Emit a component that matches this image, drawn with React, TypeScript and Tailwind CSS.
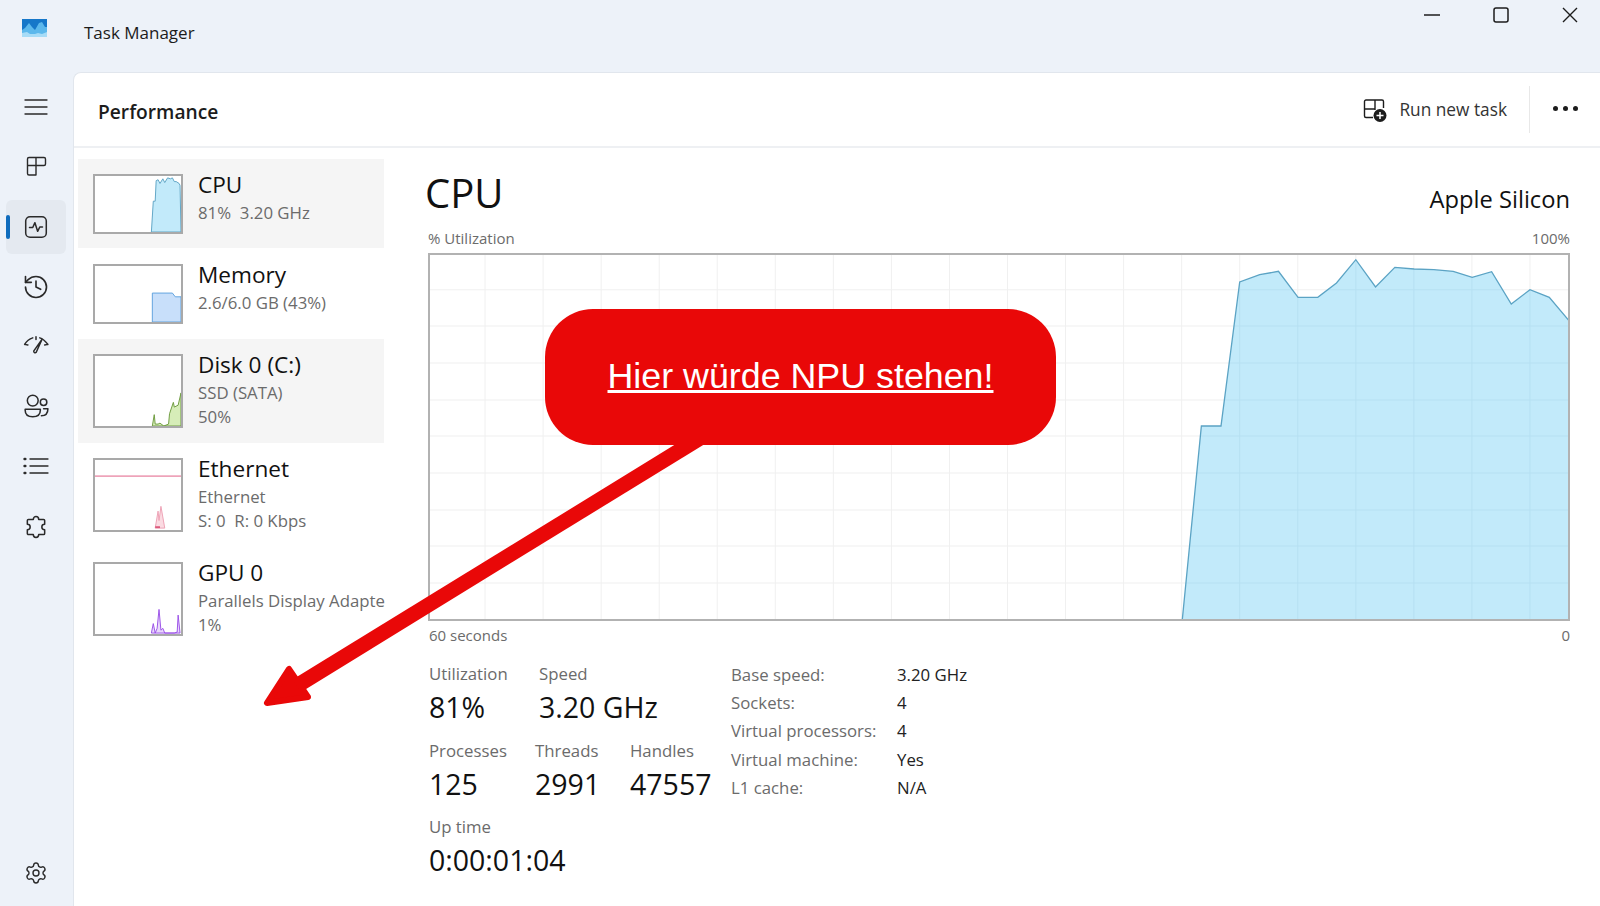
import { Settings, History } from "lucide-react";

const cpuLine = "753.7,366 772.7,173 792.3,173 811,29 831,21.7 849.7,18.3 869.3,44.3 889,44.3 907.7,30 927,6.7 946.7,34 966,14.3 985.3,16 1005,16.7 1024.3,18.3 1043.3,24.3 1062.7,18.7 1082.3,51 1101,36.7 1120.3,44.3 1139.7,67.3"

const gridX = [57, 115, 173, 231, 289, 347, 405, 463, 521, 579, 637, 695, 753, 811, 869, 927, 985, 1043, 1101]
const gridY = [36.7, 73, 110, 147, 183, 220, 257, 293, 330]

function Thumb({ h, children }: { h: string; children: React.ReactNode }) {
  return <div className={`w-[90px] shrink-0 border-2 border-[#a9a9a9] bg-white ${h}`}>{children}</div>
}

function CpuThumb() {
  return (
    <Thumb h="h-[60px]">
      <svg viewBox="0 0 90 60" preserveAspectRatio="none" className="w-full h-full">
        <polygon fill="#c2eafa" stroke="#5ba3c4" strokeWidth="1" points="59,60 61,27 63,27 64,5 66,4 68,8 71,3 73,7 76,2 79,3 81,2 83,6 85,6 88,8 89,10 90,60" />
      </svg>
    </Thumb>
  )
}

function MemoryThumb() {
  return (
    <Thumb h="h-[60px]">
      <svg viewBox="0 0 90 60" preserveAspectRatio="none" className="w-full h-full">
        <polygon fill="#c8dffa" stroke="#5ca0dd" strokeWidth="1" points="60,60 60,29 81,29 84,33 90,33 90,60" />
      </svg>
    </Thumb>
  )
}

function DiskThumb() {
  return (
    <Thumb h="h-[74px]">
      <svg viewBox="0 0 90 74" preserveAspectRatio="none" className="w-full h-full">
        <polygon fill="#d6edb8" stroke="#6d9a3d" strokeWidth="1" points="60,74 62,62 63,72 66,72 68,71 72,74 77,72 78,61 82,49 83,54 87,52 90,39 90,74" />
      </svg>
    </Thumb>
  )
}

function EthernetThumb() {
  return (
    <Thumb h="h-[74px]">
      <svg viewBox="0 0 90 74" preserveAspectRatio="none" className="w-full h-full">
        <line x1="0" y1="17" x2="90" y2="17" stroke="#e0587f" strokeWidth="1" />
        <polygon fill="#fbdbe2" stroke="#eda0b4" strokeWidth="1" points="63,72 66,54 67,64 69,49 73,72" />
        <line x1="63" y1="71" x2="68" y2="71" stroke="#dc5a7c" strokeWidth="2" />
      </svg>
    </Thumb>
  )
}

function GpuThumb() {
  return (
    <Thumb h="h-[74px]">
      <svg viewBox="0 0 90 74" preserveAspectRatio="none" className="w-full h-full">
        <polygon fill="#e9d9fb" stroke="#9a4fe8" strokeWidth="1" points="59,73 61,63 63,73 65,68 67,48 69,70 71,68 73,73 83,73 86,72 87,54 89,73" />
      </svg>
    </Thumb>
  )
}

function Item({ box, active, thumb, title, lines }: { box: string; active?: boolean; thumb: React.ReactNode; title: string; lines: string[] }) {
  return (
    <div className={`ml-[4px] w-[306px] flex pl-[15px] ${box} ${active ? "bg-[#f5f5f5]" : ""}`}>
      {thumb}
      <div className="ml-[15px] -mt-[3px] shrink-0 whitespace-nowrap">
        <div className="text-[22.6px] leading-[28px] text-[#111]">{title}</div>
        <div className="mt-[2px] text-[16.8px] leading-[24px] text-[#6b6b6b]">
          {lines.map((l) => <div key={l}>{l}</div>)}
        </div>
      </div>
    </div>
  )
}

function Stat({ w, label, value }: { w: string; label: string; value: string }) {
  return (
    <div className={w}>
      <div className="text-[16.8px] leading-[20px] text-[#6b6b6b] whitespace-nowrap">{label}</div>
      <div className="mt-[3px] text-[28.5px] leading-[40px] text-[#111] whitespace-nowrap">{value}</div>
    </div>
  )
}

function NavIcon({ children, active }: { children: React.ReactNode; active?: boolean }) {
  return (
    <div className="h-[60px] w-full pr-[2px] flex items-center justify-center relative">
      {active && <div className="absolute left-[6px] top-[3px] w-[60px] h-[54px] rounded-md bg-[#e4e9f0]" />}
      {active && <div className="absolute left-[6px] top-[18px] w-[4px] h-[24px] rounded-full bg-[#0f6cbd]" />}
      <div className="relative text-[#2a2a2a]">{children}</div>
    </div>
  )
}

const iconProps = { width: 26, height: 26, viewBox: "0 0 24 24", fill: "none", stroke: "currentColor", strokeWidth: 1.4, strokeLinecap: "round" as const, strokeLinejoin: "round" as const }

export default function App() {
  const details = [
    ["Base speed:", "3.20 GHz"],
    ["Sockets:", "4"],
    ["Virtual processors:", "4"],
    ["Virtual machine:", "Yes"],
    ["L1 cache:", "N/A"],
  ]

  return (
    <div className="relative w-[1600px] h-[906px] overflow-hidden bg-[#edf2f9] flex flex-col font-['Open_Sans',sans-serif]">
      {/* barra de titulo */}
      <div className="h-[72px] shrink-0 flex items-start relative">
        <svg width="25" height="18" viewBox="0 0 25 18" className="ml-[22px] mt-[19px]">
          <rect width="25" height="18" fill="#1677c9" />
          <path d="M0 11 L3 9 L7 4 L10 8 L13 11 L17 4 L20 3 L23 8 L25 8 V18 H0 Z" fill="#5cb8ec" />
          <path d="M0 14 L5 13 L8 15 L13 15 L16 14 L20 15 L25 13 V18 H0 Z" fill="#a7dcf7" />
        </svg>
        <div className="ml-[37px] mt-[20px] text-[17px] leading-[26px] text-[#1c1c1c]">Task Manager</div>
        <div className="ml-auto mr-[22px] mt-[7px] flex items-start gap-[53px] text-[#1c1c1c]">
          <svg width="16" height="16" viewBox="0 0 16 16"><line x1="0" y1="8" x2="16" y2="8" stroke="currentColor" strokeWidth="1.5" /></svg>
          <svg width="16" height="16" viewBox="0 0 16 16"><rect x="1" y="1" width="14" height="14" rx="2" fill="none" stroke="currentColor" strokeWidth="1.5" /></svg>
          <svg width="16" height="16" viewBox="0 0 16 16"><path d="M1 1 L15 15 M15 1 L1 15" stroke="currentColor" strokeWidth="1.4" /></svg>
        </div>
      </div>

      <div className="flex-1 flex min-h-0">
        {/* menu lateral */}
        <div className="w-[73px] shrink-0 flex flex-col pt-[5px] pb-[3px]">
          <NavIcon>
            <svg {...iconProps} width={24} height={24} strokeWidth={1.3}><path d="M1 5 H23 M1 12 H23 M1 19 H23" /></svg>
          </NavIcon>
          <NavIcon>
            <svg {...iconProps} width={24} height={24} className="-mt-[2px]"><path d="M3.5 11.5 V5 a1.5 1.5 0 0 1 1.5 -1.5 H20 a1.5 1.5 0 0 1 1.5 1.5 V10 a1.5 1.5 0 0 1 -1.5 1.5 Z M12 3.5 V21 M3.5 11.5 V19.5 a1.5 1.5 0 0 0 1.5 1.5 H12" /></svg>
          </NavIcon>
          <NavIcon active>
            <svg {...iconProps}><rect x="2.5" y="2.5" width="19" height="19" rx="4" /><path d="M6 12.5 H9 L11 8 L13.5 16 L15.5 12 H18" /></svg>
          </NavIcon>
          <NavIcon><History size={28} strokeWidth={1.4} /></NavIcon>
          <NavIcon>
            <svg {...iconProps} className="-mt-[2px]">
              <path d="M1.5 10.5 C3 8 5.5 5.5 9 4.5 M1.5 10.5 L4.5 11 M15.5 4.5 C19 5.5 21 8 23 10.5 M23 10.5 L20 11 M12 3.5 V6" />
              <path d="M17.5 6 L10 16.5 a1.3 1.3 0 0 0 2.2 1.3 Z" />
            </svg>
          </NavIcon>
          <NavIcon>
            <svg {...iconProps} className="-mt-[2px]"><circle cx="9" cy="7" r="5" /><circle cx="19" cy="8.5" r="3" /><path d="M2 15 H16 V16 C16 20 13 22 9 22 C5 22 2 20 2 16 Z" /><path d="M19 14.5 H23 C23 18.5 21 21 17 21" /></svg>
          </NavIcon>
          <NavIcon>
            <svg {...iconProps} className="-mt-[2px]"><path d="M6.5 5.5 H23 M6.5 12 H23 M6.5 18.5 H23" /><path d="M1.5 5.5 h0.6 M1.5 12 h0.6 M1.5 18.5 h0.6" strokeWidth={2.4} /></svg>
          </NavIcon>
          <NavIcon>
            <svg {...iconProps}><path d="M9.5 5 C9.5 1.5 14.5 1.5 14.5 5 H19 a1 1 0 0 1 1 1 V9.5 C16.5 9.5 16.5 14.5 20 14.5 V18 a1 1 0 0 1 -1 1 H14.5 C14.5 22.5 9.5 22.5 9.5 19 H5 a1 1 0 0 1 -1 -1 V14.5 C7.5 14.5 7.5 9.5 4 9.5 V6 a1 1 0 0 1 1 -1 Z" /></svg>
          </NavIcon>
          <div className="mt-auto">
            <NavIcon><Settings size={24} strokeWidth={1.4} /></NavIcon>
          </div>
        </div>

        {/* conteudo */}
        <div className="flex-1 min-w-0 bg-white rounded-tl-lg border-l border-t border-[#e1e6ed] flex flex-col">
          <div className="h-[75px] shrink-0 border-b-2 border-[#eef0f3] flex items-center">
            <div className="ml-[24px] mt-[4px] text-[19.2px] font-semibold leading-[28px] text-[#1c1c1c]">Performance</div>
            <div className="ml-auto flex items-center">
              <svg width="24" height="24" viewBox="0 0 24 24" className="text-[#1c1c1c]">
                <path d="M12 12 V2 H3 a1.5 1.5 0 0 0 -1.5 1.5 V18 a1.5 1.5 0 0 0 1.5 1.5 H10 M1.5 11 H12 M12 2 H19 a1.5 1.5 0 0 1 1.5 1.5 V10" fill="none" stroke="currentColor" strokeWidth="1.4" />
                <circle cx="17" cy="17.5" r="6.5" fill="currentColor" />
                <path d="M17 14 V21 M13.5 17.5 H20.5" stroke="white" strokeWidth="1.5" />
              </svg>
              <div className="ml-[12px] text-[17.3px] leading-[24px] text-[#333]">Run new task</div>
              <div className="ml-[22px] w-px h-[47px] bg-[#e8e8e8]" />
              <div className="ml-[23px] mr-[22px] -mt-[2px] flex gap-[5px]">
                <span className="w-[5px] h-[5px] rounded-full bg-[#1c1c1c]" />
                <span className="w-[5px] h-[5px] rounded-full bg-[#1c1c1c]" />
                <span className="w-[5px] h-[5px] rounded-full bg-[#1c1c1c]" />
              </div>
            </div>
          </div>

          <div className="flex-1 flex min-h-0">
            <div className="w-[354px] shrink-0 pt-[11px]">
              <Item box="h-[89px] pt-[15px]" active thumb={<CpuThumb />} title="CPU" lines={["81%\u00a0\u00a03.20 GHz"]} />
              <Item box="h-[91px] pt-[16px]" thumb={<MemoryThumb />} title="Memory" lines={["2.6/6.0 GB (43%)"]} />
              <Item box="h-[104px] pt-[15px]" active thumb={<DiskThumb />} title="Disk 0 (C:)" lines={["SSD (SATA)", "50%"]} />
              <Item box="h-[104px] pt-[15px]" thumb={<EthernetThumb />} title="Ethernet" lines={["Ethernet", "S: 0\u00a0\u00a0R: 0 Kbps"]} />
              <Item box="h-[104px] pt-[15px]" thumb={<GpuThumb />} title="GPU 0" lines={["Parallels Display Adapte", "1%"]} />
            </div>

            <div className="flex-1 min-w-0 pr-[30px] pt-[22px]">
              <div className="flex justify-between items-end h-[46px]">
                <div className="-ml-[3px] text-[40px] leading-[46px] text-[#111]">CPU</div>
                <div className="text-[23.7px] leading-[34px] text-[#111]">Apple Silicon</div>
              </div>
              <div className="mt-[12px] flex justify-between text-[15px] leading-[20px] text-[#6b6b6b]">
                <span>% Utilization</span>
                <span>100%</span>
              </div>
              <div className="mt-[5px] h-[368px] border-2 border-[#b2b2b2]">
                <svg viewBox="2 2 1137 364" preserveAspectRatio="none" className="w-full h-full block">
                  <defs>
                    <clipPath id="areaCpu"><polygon points={`${cpuLine} 1140,366`} /></clipPath>
                  </defs>
                  {gridX.map((x) => <line key={x} x1={x} y1="0" x2={x} y2="366" stroke="#f0f0f0" strokeWidth="1" />)}
                  {gridY.map((y) => <line key={y} x1="0" y1={y} x2="1140" y2={y} stroke="#f0f0f0" strokeWidth="1" />)}
                  <polygon points={`${cpuLine} 1140,366`} fill="#c2eafa" />
                  <g clipPath="url(#areaCpu)">
                    {gridX.map((x) => <line key={x} x1={x} y1="0" x2={x} y2="366" stroke="#b6e0f2" strokeWidth="1" />)}
                    {gridY.map((y) => <line key={y} x1="0" y1={y} x2="1140" y2={y} stroke="#b6e0f2" strokeWidth="1" />)}
                  </g>
                  <polyline points={cpuLine} fill="none" stroke="#5ba3c4" strokeWidth="1.3" />
                </svg>
              </div>
              <div className="mt-[4px] flex justify-between text-[15px] leading-[20px] text-[#6b6b6b]">
                <span className="ml-px">60 seconds</span>
                <span>0</span>
              </div>

              <div className="mt-[19px] ml-px flex">
                <div className="w-[302px] shrink-0">
                  <div className="flex h-[76.5px]">
                    <Stat w="w-[110px]" label="Utilization" value="81%" />
                    <Stat w="w-[150px]" label="Speed" value="3.20 GHz" />
                  </div>
                  <div className="flex h-[76.5px]">
                    <Stat w="w-[106px]" label="Processes" value="125" />
                    <Stat w="w-[95px]" label="Threads" value="2991" />
                    <Stat w="w-[90px]" label="Handles" value="47557" />
                  </div>
                  <div className="flex h-[76.5px]">
                    <Stat w="w-[200px]" label="Up time" value="0:00:01:04" />
                  </div>
                </div>
                <div className="-mt-[4px] grid grid-cols-[166px_auto] auto-rows-[28.4px] items-center text-[16.8px] h-fit">
                  {details.map(([k, v]) => [
                    <div key={k} className="text-[#6b6b6b] whitespace-nowrap">{k}</div>,
                    <div key={v + k} className="text-[#222]">{v}</div>,
                  ])}
                </div>
              </div>
            </div>
          </div>
        </div>
      </div>

      {/* seta e balao vermelhos por cima */}
      <svg width="1600" height="906" className="absolute left-0 top-0 pointer-events-none">
        <line x1="705" y1="435" x2="290" y2="690" stroke="#e90808" strokeWidth="15" />
        <polygon points="289,669 267,703 308,697" fill="#e90808" stroke="#e90808" strokeWidth="6" strokeLinejoin="round" />
      </svg>
      <div className="absolute left-[545px] top-[309px] w-[511px] h-[136px] rounded-[48px] bg-[#e90808] flex items-center justify-center">
        <a className="text-white underline text-[35.8px] leading-[44px] -mt-[3px] font-['Liberation_Sans',sans-serif]">Hier würde NPU stehen!</a>
      </div>
    </div>
  )
}
